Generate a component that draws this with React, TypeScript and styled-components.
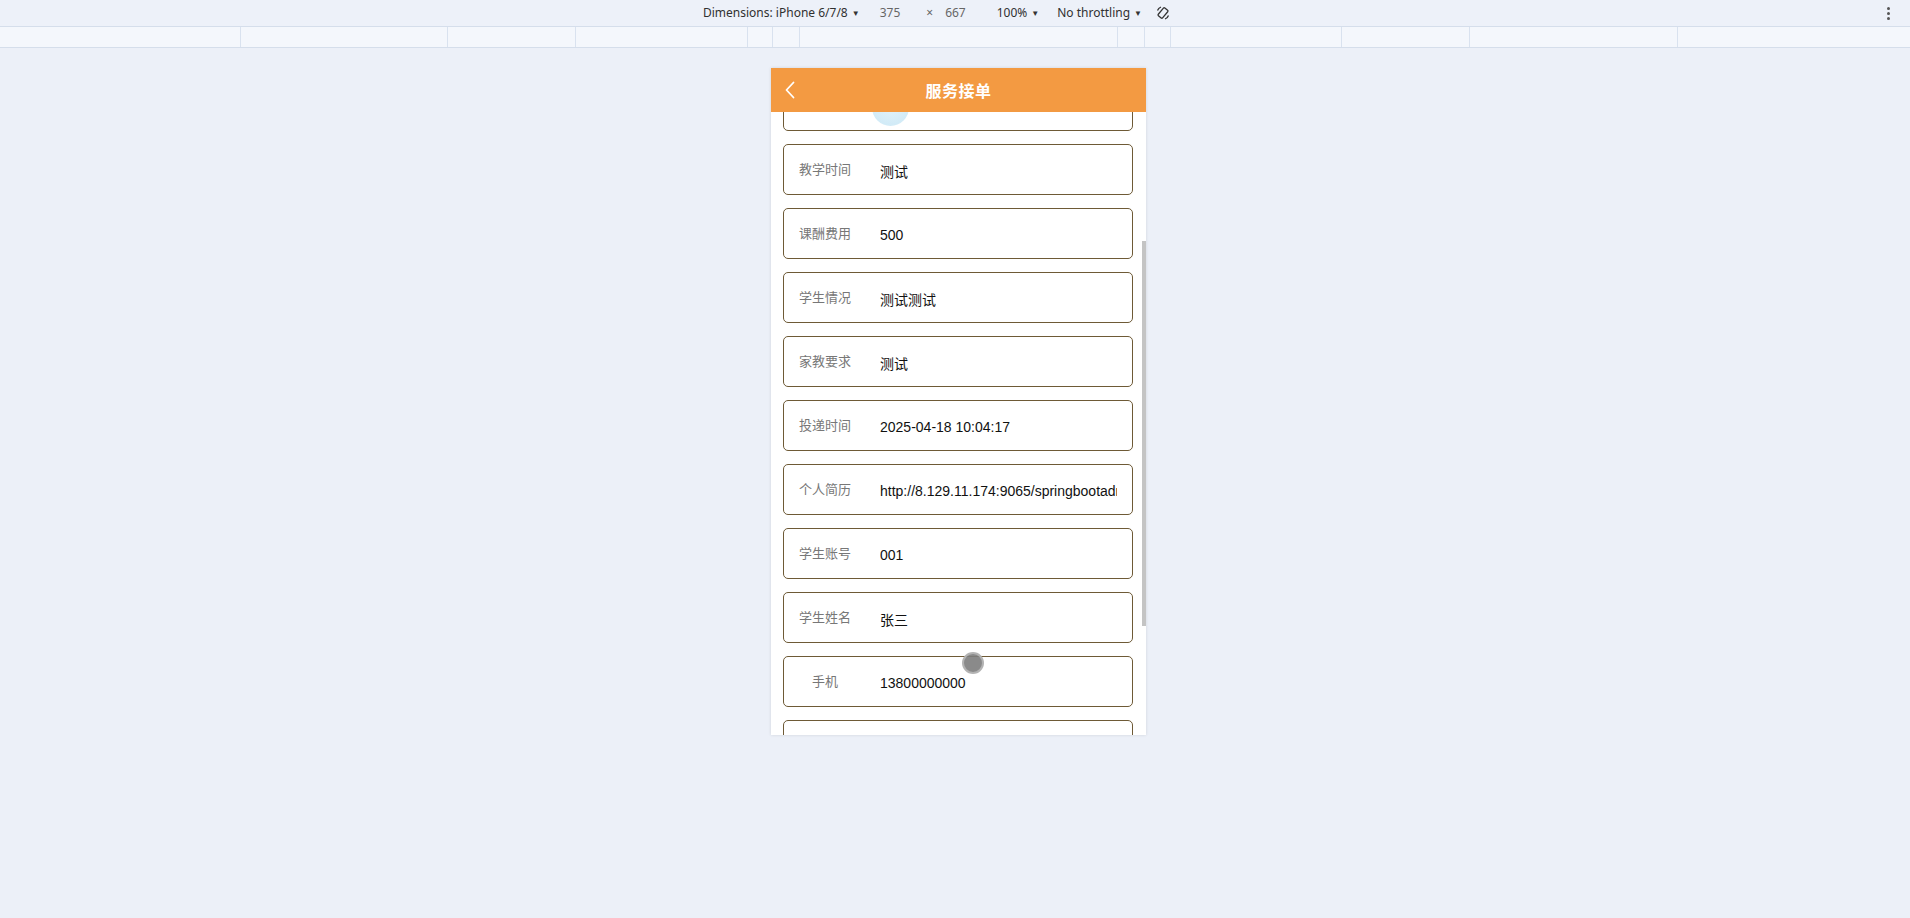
import React, { useLayoutEffect, useRef } from "react";
import styled, { createGlobalStyle } from "styled-components";

const GlobalStyle = createGlobalStyle`
  html, body { margin: 0; padding: 0; }
  body {
    background: #ecf0f8;
    font-family: "Noto Sans", "Liberation Sans", "Noto Sans CJK SC", sans-serif;
  }
  * { box-sizing: border-box; }
`;

const Page = styled.div`
  min-height: 100vh;
  background: #ecf0f8;
  display: flex;
  flex-direction: column;
`;

const Toolbar = styled.div`
  height: 27px;
  display: flex;
  align-items: center;
  padding-left: 703px;
  border-bottom: 1px solid #d5deeb;
  background: #edf1f9;
  position: relative;
  font-size: 12px;
  line-height: 16px;
  color: #333;
`;

const ToolItem = styled.span<{ $ml?: number; $muted?: boolean }>`
  margin-left: ${(p) => p.$ml ?? 0}px;
  color: ${(p) => (p.$muted ? "#666" : "#303030")};
  white-space: nowrap;
  display: inline-flex;
  align-items: center;
  gap: 4px;
  line-height: 16px;
`;

const Caret = styled.span`
  font-size: 8px;
  color: #333;
`;

const Kebab = styled.div`
  position: absolute;
  right: 20px;
  top: 7px;
  display: flex;
  flex-direction: column;
  gap: 2px;
  span {
    width: 3px;
    height: 3px;
    border-radius: 50%;
    background: #555;
  }
`;

const Ruler = styled.div<{ $cols: string }>`
  height: 21px;
  display: grid;
  grid-template-columns: ${(p) => p.$cols};
  background: #f4f7fc;
  border-bottom: 1px solid #d5deeb;
`;

const RulerCell = styled.div<{ $first?: boolean }>`
  border-left: ${(p) => (p.$first ? "none" : "1px solid #d9e2ef")};
`;

const Stage = styled.div`
  display: flex;
  justify-content: center;
  padding: 20px 0 0 7px;
`;

const Device = styled.div`
  position: relative;
  width: 375px;
  height: 667px;
  background: #fff;
  box-shadow: 0 0 3px rgba(0, 0, 0, 0.12);
  overflow: hidden;
`;

const Header = styled.div`
  position: absolute;
  left: 0;
  top: 0;
  right: 0;
  height: 44px;
  background: #f39a42;
  display: flex;
  align-items: center;
  justify-content: center;
  z-index: 2;
`;

const BackBtn = styled.div`
  position: absolute;
  left: 13px;
  top: 13px;
  width: 12px;
  height: 18px;
  display: flex;
`;

const Title = styled.h1`
  margin: 0;
  font-size: 16px;
  font-weight: 700;
  color: #fff;
  font-family: "Noto Sans CJK SC", sans-serif;
  letter-spacing: 0.5px;
`;

const Scroller = styled.div`
  height: 667px;
  overflow-y: scroll;
  scrollbar-width: none;
  &::-webkit-scrollbar {
    display: none;
  }
`;

const ScrollThumb = styled.div`
  position: absolute;
  right: 0;
  top: 173px;
  width: 4px;
  height: 385px;
  background: #c4c4c4;
  z-index: 1;
`;

const List = styled.div`
  display: flex;
  flex-direction: column;
  gap: 13px;
  padding: 56px 13px 24px 12px;
`;

const Card = styled.div<{ $h?: number }>`
  height: ${(p) => p.$h ?? 51}px;
  border: 1px solid #6e5a36;
  border-radius: 5px;
  display: flex;
  align-items: center;
  padding: 0 15px;
  background: #fff;
`;

const Label = styled.div`
  flex: 0 0 52px;
  text-align: center;
  font-size: 13px;
  color: #777;
  font-family: "Noto Sans CJK SC", sans-serif;
  white-space: nowrap;
  margin-top: -2px;
`;

const Value = styled.div`
  margin-left: 29px;
  flex: 1;
  overflow: hidden;
  white-space: nowrap;
  font-size: 14px;
  color: #111;
  font-family: "Liberation Sans", "Noto Sans CJK SC", sans-serif;
  padding-top: 3px;
`;

const Avatar = styled.div`
  align-self: flex-end;
  margin: 0 0 4px 21px;
  width: 37px;
  height: 37px;
  border-radius: 50%;
  background: radial-gradient(circle at 50% 40%, #e6f4fb 0%, #d2ebf7 70%, #d9eef8 100%);
`;

const Touch = styled.div`
  position: absolute;
  left: 191px;
  top: 584px;
  width: 22px;
  height: 22px;
  border-radius: 50%;
  background: rgba(125, 125, 125, 0.9);
  border: 2px solid rgba(190, 190, 190, 0.8);
  z-index: 3;
`;

const rulerStops = [240, 447, 575, 747, 772, 799, 1117, 1144, 1170, 1341, 1469, 1677, 1910];

const rows: { label: string; value: string }[] = [
  { label: "教员账号", value: "002" },
  { label: "教员姓名", value: "李四" },
  { label: "家教名称", value: "测试" },
  { label: "教学时间", value: "测试" },
  { label: "课酬费用", value: "500" },
  { label: "学生情况", value: "测试测试" },
  { label: "家教要求", value: "测试" },
  { label: "投递时间", value: "2025-04-18 10:04:17" },
  { label: "个人简历", value: "http://8.129.11.174:9065/springbootadmin/upload/1744941852000.doc" },
  { label: "学生账号", value: "001" },
  { label: "学生姓名", value: "张三" },
  { label: "手机", value: "13800000000" },
  { label: "审核回复", value: "" },
  { label: "审核状态", value: "" },
];

function RotateIcon() {
  return (
    <svg width="16" height="16" viewBox="0 0 16 16" fill="none" stroke="#333" strokeWidth="1.3">
      <rect x="5.2" y="3" width="5.6" height="10" rx="1" transform="rotate(40 8 8)" />
      <path d="M2.5 5.5 A6 6 0 0 1 6 2" />
      <path d="M13.5 10.5 A6 6 0 0 1 10 14" />
    </svg>
  );
}

export default function App() {
  const ref = useRef<HTMLDivElement>(null);
  useLayoutEffect(() => {
    if (ref.current) ref.current.scrollTop = 300;
  }, []);

  let prev = 0;
  const cols = rulerStops
    .map((s) => {
      const w = s - prev;
      prev = s;
      return `${w}px`;
    })
    .join(" ");

  return (
    <Page>
      <GlobalStyle />
      <Toolbar>
        <ToolItem>
          Dimensions: iPhone 6/7/8 <Caret>▼</Caret>
        </ToolItem>
        <ToolItem $ml={20} $muted>375</ToolItem>
        <ToolItem $ml={26} $muted>×</ToolItem>
        <ToolItem $ml={12} $muted>667</ToolItem>
        <ToolItem $ml={31}>
          100% <Caret>▼</Caret>
        </ToolItem>
        <ToolItem $ml={18}>
          No throttling <Caret>▼</Caret>
        </ToolItem>
        <ToolItem $ml={13}>
          <RotateIcon />
        </ToolItem>
        <Kebab>
          <span />
          <span />
          <span />
        </Kebab>
      </Toolbar>
      <Ruler $cols={cols}>
        {rulerStops.map((s, i) => (
          <RulerCell key={s} $first={i === 0} />
        ))}
      </Ruler>
      <Stage>
        <Device>
          <Header>
            <BackBtn>
              <svg width="12" height="18" viewBox="0 0 12 18" fill="none">
                <polyline points="9.5,1.5 2.5,9 9.5,16.5" stroke="#fff" strokeWidth="1.8" strokeLinecap="round" strokeLinejoin="round" />
              </svg>
            </BackBtn>
            <Title>服务接单</Title>
          </Header>
          <Scroller ref={ref}>
            <List>
              {rows.slice(0, 3).map((r) => (
                <Card key={r.label}>
                  <Label>{r.label}</Label>
                  <Value>{r.value}</Value>
                </Card>
              ))}
              <Card $h={115}>
                <Label>图片</Label>
                <Avatar />
              </Card>
              {rows.slice(3).map((r) => (
                <Card key={r.label}>
                  <Label>{r.label}</Label>
                  <Value>{r.value}</Value>
                </Card>
              ))}
            </List>
          </Scroller>
          <ScrollThumb />
          <Touch />
        </Device>
      </Stage>
    </Page>
  );
}
